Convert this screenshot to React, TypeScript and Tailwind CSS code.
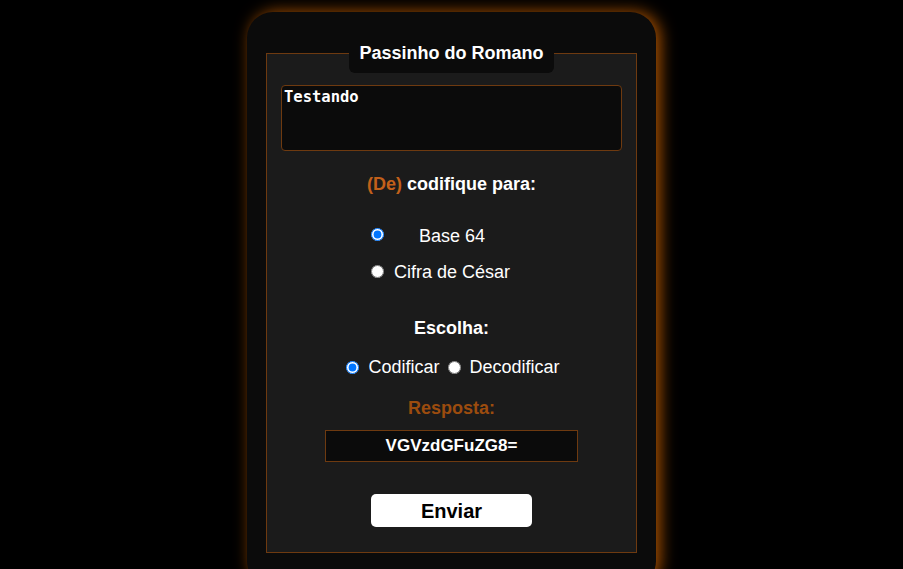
import { useState } from 'react';

export default function App() {
  const [text, setText] = useState('Testando');
  const [cipher, setCipher] = useState('base64');
  const [mode, setMode] = useState('codificar');

  return (
    <div className="h-screen w-full overflow-hidden bg-black flex justify-center font-['Liberation_Sans',Arial,sans-serif] text-white">
      <div className="mt-[12px] w-[409px] h-[575px] shrink-0 rounded-[26px] bg-[#0b0b0b] px-[19px] pt-[41px] shadow-[4px_0_16px_rgba(230,110,0,0.75)]">
        {/* Quadro principal */}
        <div className="h-[500px] border border-[#6e3a10] bg-[#1b1b1b] flex flex-col items-center">
          <div className="-mt-[21px] w-[205px] h-[40px] bg-[#0b0b0b] rounded-b-[6px] py-[9px] text-center text-[18px] leading-[22px] font-bold">
            Passinho do Romano
          </div>

          <textarea
            value={text}
            onChange={(e) => setText(e.target.value)}
            className="mt-[12px] w-[341px] h-[66px] resize-none rounded-[4px] border border-[#6e3a10] bg-[#0b0b0b] px-[2px] py-[2px] text-white font-['DejaVu_Sans_Mono',monospace] font-bold text-[15.5px] leading-[18px] outline-none"
          />

          <p className="mt-[22px] text-[18px] leading-[22px] font-bold">
            <span className="text-[#c2601a]">(De)</span> codifique para:
          </p>

          <div className="self-stretch pl-[104px] mt-[30px] flex flex-col">
            <label className="flex items-center h-[22px] text-[18px]">
              <input
                type="radio"
                name="cipher"
                checked={cipher === 'base64'}
                onChange={() => setCipher('base64')}
                className="m-0 w-[13px] h-[13px] -mt-[4px]"
              />
              <span className="ml-[35px]">Base 64</span>
            </label>
            <label className="flex items-center h-[22px] mt-[14px] text-[18px]">
              <input
                type="radio"
                name="cipher"
                checked={cipher === 'cesar'}
                onChange={() => setCipher('cesar')}
                className="m-0 w-[13px] h-[13px] -mt-[2px]"
              />
              <span className="ml-[10px]">Cifra de César</span>
            </label>
          </div>

          <p className="mt-[34px] text-[18px] leading-[22px] font-bold">Escolha:</p>

          <div className="mt-[17px] h-[22px] flex items-center text-[18px] pl-[3px]">
            <input
              type="radio"
              name="mode"
              checked={mode === 'codificar'}
              onChange={() => setMode('codificar')}
              className="m-0 w-[13px] h-[13px]"
            />
            <span className="ml-[9px]">Codificar</span>
            <input
              type="radio"
              name="mode"
              checked={mode === 'decodificar'}
              onChange={() => setMode('decodificar')}
              className="m-0 ml-[9px] w-[13px] h-[13px]"
            />
            <span className="ml-[8px]">Decodificar</span>
          </div>

          <p className="mt-[19px] text-[18px] leading-[22px] font-bold text-[#9c4c0e]">Resposta:</p>

          <div className="mt-[11px] w-[253px] h-[32px] border border-[#6e3a10] bg-[#0b0b0b] flex items-center justify-center text-[17px] font-bold">
            VGVzdGFuZG8=
          </div>

          <button className="mt-[32px] w-[161px] h-[33px] rounded-[5px] bg-white text-black text-[20px] font-bold leading-none">
            Enviar
          </button>
        </div>
      </div>
    </div>
  );
}
